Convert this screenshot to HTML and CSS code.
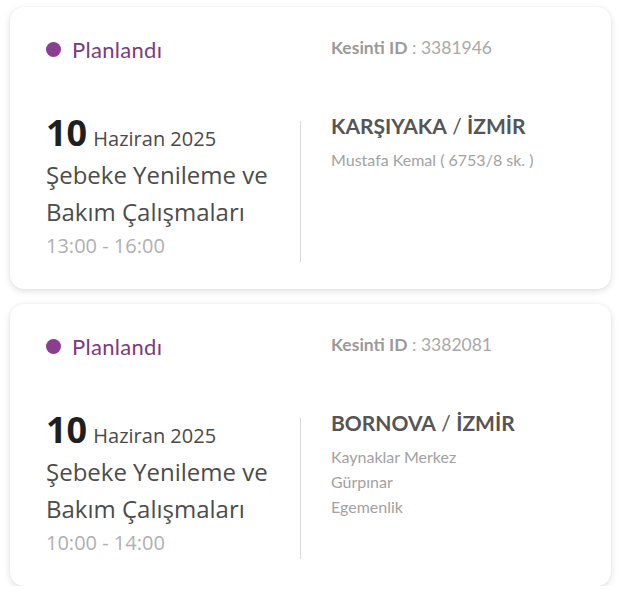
FILE: index.html
```html
<!DOCTYPE html>
<html lang="tr">
<head>
<meta charset="utf-8">
<link rel="stylesheet" href="styles.css">
</head>
<body>
<div class="list">
  <div class="card">
    <div class="head">
      <div class="status"><span class="dot"></span><span class="status-text">Planlandı</span></div>
      <div class="cid"><b>Kesinti ID</b> : 3381946</div>
    </div>
    <div class="body">
      <div class="left">
        <div class="date"><span class="day">10</span> <span class="month">Haziran 2025</span></div>
        <div class="title">Şebeke Yenileme ve<br>Bakım Çalışmaları</div>
        <div class="time">13:00 - 16:00</div>
      </div>
      <div class="right">
        <div class="region"><b>KARŞIYAKA</b> / <b>İZMİR</b></div>
        <div class="addr">
          <div>Mustafa Kemal ( 6753/8 sk. )</div>
        </div>
      </div>
    </div>
  </div>
  <div class="card">
    <div class="head">
      <div class="status"><span class="dot"></span><span class="status-text">Planlandı</span></div>
      <div class="cid"><b>Kesinti ID</b> : 3382081</div>
    </div>
    <div class="body">
      <div class="left">
        <div class="date"><span class="day">10</span> <span class="month">Haziran 2025</span></div>
        <div class="title">Şebeke Yenileme ve<br>Bakım Çalışmaları</div>
        <div class="time">10:00 - 14:00</div>
      </div>
      <div class="right">
        <div class="region"><b>BORNOVA</b> / <b>İZMİR</b></div>
        <div class="addr">
          <div>Kaynaklar Merkez</div>
          <div>Gürpınar</div>
          <div>Egemenlik</div>
        </div>
      </div>
    </div>
  </div>
</div>
</body>
</html>
```
FILE: styles.css
```css
html, body {
  margin: 0;
  padding: 0;
  background: #ffffff;
}
body {
  padding: 7px 8px 0 10px;
  font-family: "Lato", "Open Sans", sans-serif;
}
.list {
  display: flex;
  flex-direction: column;
  gap: 15px;
}
.card {
  background: #fff;
  border-radius: 14px;
  box-shadow: 0 2px 7px rgba(0,0,0,0.13), 0 0 2px rgba(0,0,0,0.05);
  padding: 27px 36px 27px 36px;
}
.head {
  display: grid;
  grid-template-columns: 254px 1fr;
  align-items: center;
  height: 30px;
}
.status {
  display: flex;
  align-items: center;
  gap: 11px;
}
.dot {
  width: 15px;
  height: 15px;
  border-radius: 50%;
  background: #8a3e90;
}
.status-text {
  font-size: 22px;
  letter-spacing: 0.3px;
  color: #7a3b80;
}
.cid {
  padding-left: 31px;
  margin-top: -3px;
  font-size: 17.5px;
  color: #a8a8a8;
}
.cid b {
  font-weight: 700;
  color: #9a9a9a;
}
.body {
  display: grid;
  grid-template-columns: 254px 1fr;
  margin-top: 54px;
}
.left {
  display: flex;
  flex-direction: column;
  font-family: "Open Sans", "Noto Sans", sans-serif;
}
.date {
  line-height: 30px;
  height: 38px;
  color: #444;
}
.day {
  font-size: 36px;
  font-weight: 700;
  color: #1f1f1f;
}
.month {
  margin-left: 2px;
  font-size: 20px;
  color: #4a4a4a;
}
.title {
  font-size: 24px;
  line-height: 37px;
  color: #4c4c4c;
}
.time {
  font-size: 20px;
  line-height: 32px;
  color: #b0b0b0;
}
.right {
  border-left: 1px solid #d9d9d9;
  padding-left: 30px;
  margin-top: 3px;
}
.region {
  font-size: 21px;
  line-height: 18px;
  margin-top: -4px;
  color: #555;
}
.region b {
  font-weight: 700;
}
.addr {
  margin-top: 12px;
  font-size: 16px;
  line-height: 25px;
  color: #a2a2a2;
}
```
